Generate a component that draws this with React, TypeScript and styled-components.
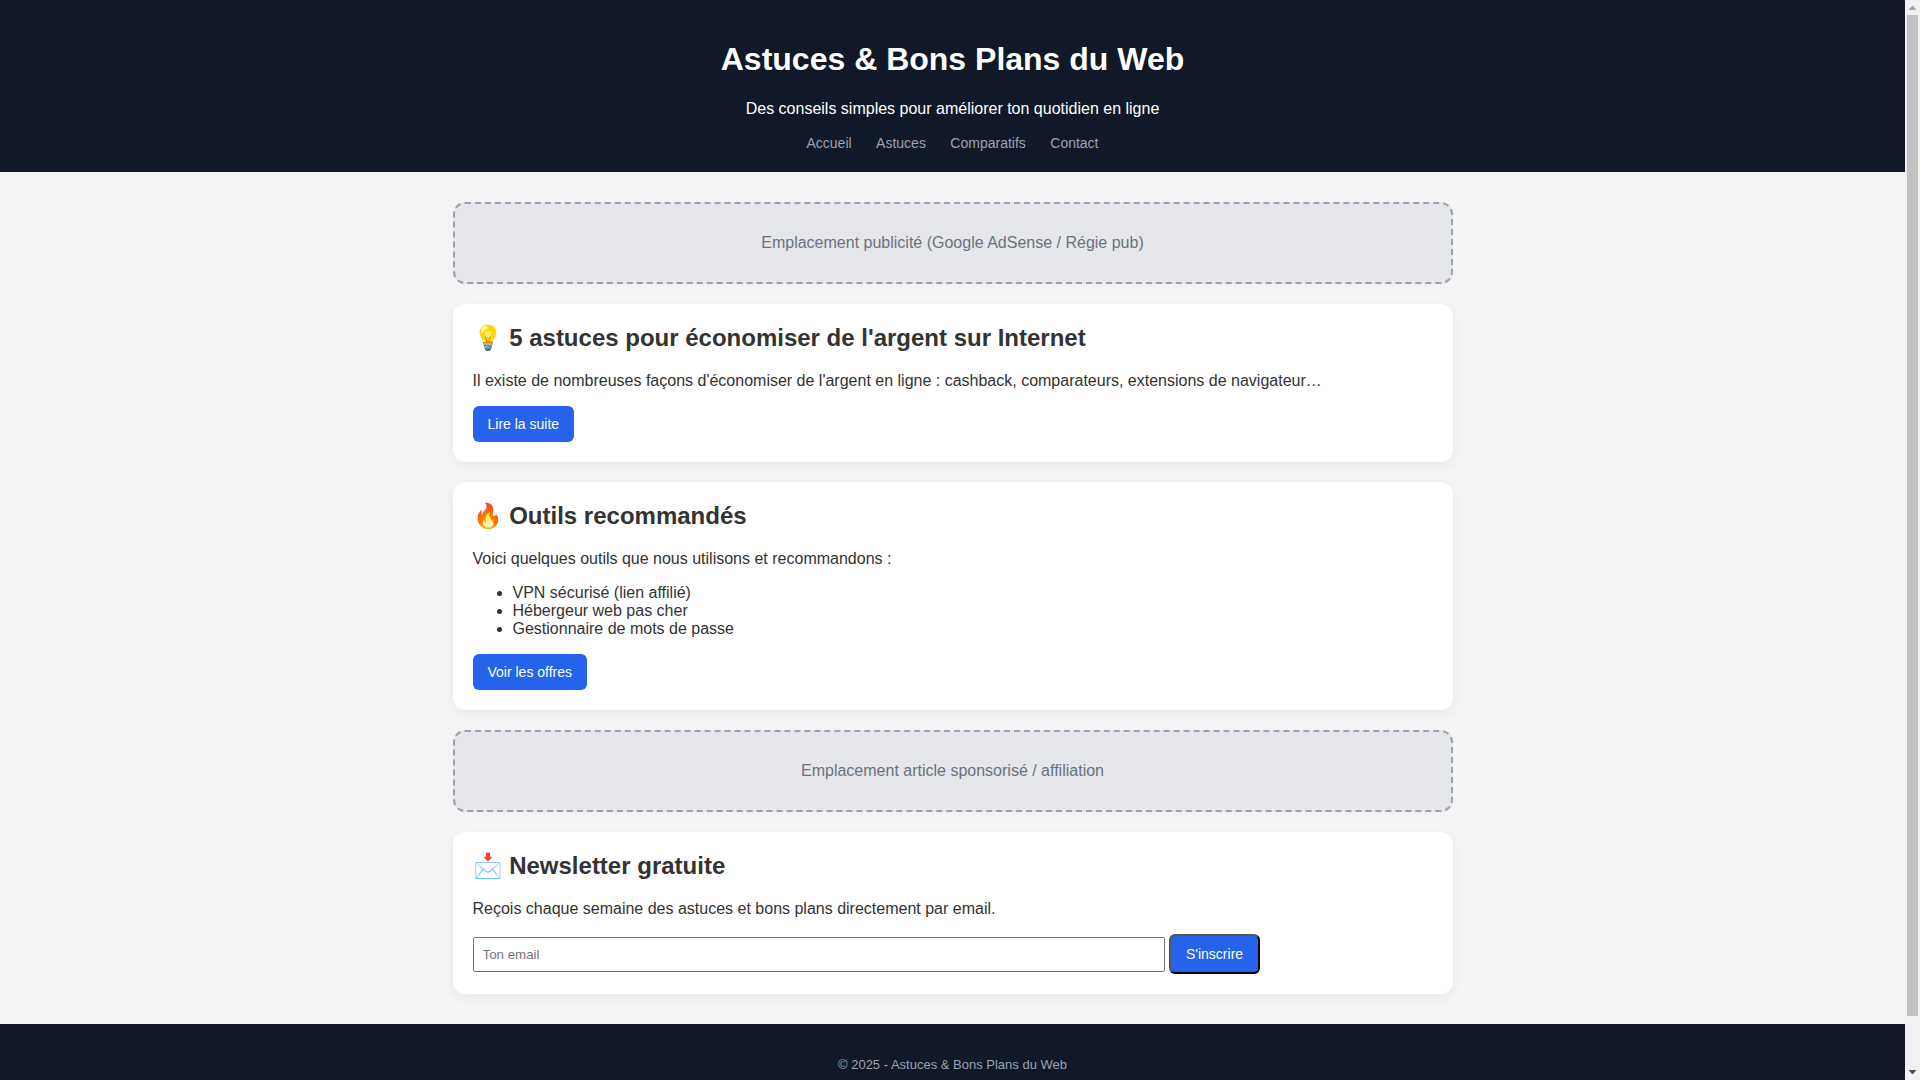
import React from 'react'
import styled, { createGlobalStyle } from 'styled-components'

const GlobalStyle = createGlobalStyle`
  body {
    margin: 0 15px 0 0;
    background: #f4f4f4;
    color: #333;
    font-family: "Liberation Sans", Arial, sans-serif;
  }
`

const Header = styled.header`
  background: #111827;
  color: #fff;
  padding: 20px;
  text-align: center;
`

const Title = styled.h1`
  font-size: 32px;
`

const Tagline = styled.p`
  font-size: 16px;
`

const NavLink = styled.a`
  color: #9ca3af;
  font-size: 14px;
  margin: 0 10px;
  text-decoration: none;
`

const Main = styled.main`
  max-width: 1000px;
  margin: 30px auto;
`

const Placeholder = styled.div`
  background: #e5e7eb;
  border: 2px dashed #9ca3af;
  border-radius: 12px;
  color: #6b7280;
  margin-bottom: 20px;
  padding: 30px;
  text-align: center;
`

const Card = styled.section`
  background: #fff;
  border-radius: 12px;
  box-shadow: 0 4px 12px rgba(0, 0, 0, 0.05);
  margin-bottom: 20px;
  padding: 20px;

  &:last-child {
    margin-bottom: 0;
  }
`

const CardTitle = styled.h2`
  font-size: 24px;
  margin-top: 0;
`

const List = styled.ul`
  margin: 16px 0;
`

const ActionLink = styled.a`
  background: #2563eb;
  border-radius: 6px;
  color: #fff;
  display: inline-block;
  font-size: 14px;
  padding: 10px 15px;
  text-decoration: none;
`

const EmailInput = styled.input`
  border: 1px solid #767676;
  border-radius: 2px;
  box-sizing: border-box;
  padding: 9px;
  width: 692px;
`

const SubmitButton = styled.button`
  background: #2563eb;
  border-radius: 6px;
  border: 2px solid;
  border-color: #555 #000 #000 #555;
  color: #fff;
  font-family: inherit;
  font-size: 14px;
  padding: 10px 15px;
`

const Footer = styled.footer`
  background: #111827;
  color: #9ca3af;
  font-size: 13px;
  padding: 20px;
  text-align: center;
`

const ScrollTrack = styled.div`
  background: #f1f1f1;
  bottom: 0;
  display: flex;
  flex-direction: column;
  position: fixed;
  right: 0;
  top: 0;
  width: 15px;
`

const ScrollArrow = styled.svg`
  display: block;
  flex: none;
  height: 15px;
  width: 15px;
`

const ScrollThumb = styled.div`
  background: #c1c1c1;
  flex: none;
  height: 1001px;
  margin: 0 2px;
`

const ScrollSpacer = styled.div`
  flex: 1;
`

const links = ['Accueil', 'Astuces', 'Comparatifs', 'Contact']
const tools = ['VPN sécurisé (lien affilié)', 'Hébergeur web pas cher', 'Gestionnaire de mots de passe']

const App: React.FC = () => {
  return (
    <>
      <GlobalStyle />
      <Header>
        <Title>Astuces &amp; Bons Plans du Web</Title>
        <Tagline>Des conseils simples pour améliorer ton quotidien en ligne</Tagline>
        <nav>
          {links.map((link) => (
            <React.Fragment key={link}>
              <NavLink href="#">{link}</NavLink>{' '}
            </React.Fragment>
          ))}
        </nav>
      </Header>
      <Main>
        <Placeholder>Emplacement publicité (Google AdSense / Régie pub)</Placeholder>
        <Card>
          <CardTitle>💡 5 astuces pour économiser de l'argent sur Internet</CardTitle>
          <p>Il existe de nombreuses façons d'économiser de l'argent en ligne : cashback, comparateurs, extensions de navigateur…</p>
          <ActionLink href="#">Lire la suite</ActionLink>
        </Card>
        <Card>
          <CardTitle>🔥 Outils recommandés</CardTitle>
          <p>Voici quelques outils que nous utilisons et recommandons :</p>
          <List>
            {tools.map((tool) => (
              <li key={tool}>{tool}</li>
            ))}
          </List>
          <ActionLink href="#">Voir les offres</ActionLink>
        </Card>
        <Placeholder>Emplacement article sponsorisé / affiliation</Placeholder>
        <Card>
          <CardTitle>📩 Newsletter gratuite</CardTitle>
          <p>Reçois chaque semaine des astuces et bons plans directement par email.</p>
          <form>
            <EmailInput type="email" placeholder="Ton email" />{' '}
            <SubmitButton type="button">S'inscrire</SubmitButton>
          </form>
        </Card>
      </Main>
      <Footer>
        <p>© 2025 - Astuces &amp; Bons Plans du Web</p>
      </Footer>
      <ScrollTrack>
        <ScrollArrow viewBox="0 0 15 15">
          <path d="M7.5 5.5 L11.5 10 L3.5 10 Z" fill="#a3a3a3" />
        </ScrollArrow>
        <ScrollThumb />
        <ScrollSpacer />
        <ScrollArrow viewBox="0 0 15 15">
          <path d="M3.5 5 L11.5 5 L7.5 9.5 Z" fill="#505050" />
        </ScrollArrow>
      </ScrollTrack>
    </>
  )
}

export default App
